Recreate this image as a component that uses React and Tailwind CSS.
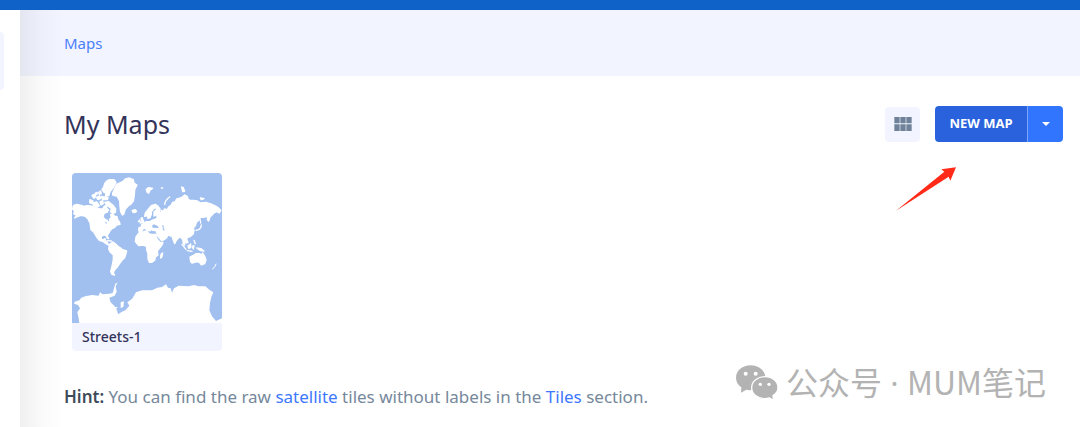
import { useState } from 'react';

const maps = [{ id: 'streets-1', name: 'Streets-1' }];

function WorldThumbnail() {
  return (
    <svg viewBox="0 0 450 450" className="block w-full bg-[#a1c0f0]" aria-hidden="true">
      <g fill="#fff" stroke="#fff" strokeWidth="4" strokeLinejoin="round" strokeLinecap="round">
        {/* North America */}
        <path d="M4 98 14 94 28 97 36 100 44 98 58 99 68 104 82 107 92 108 96 101 103 96 104 106 110 112 102 118 95 124 93 132 98 138 107 143 110 150 114 145 113 138 118 134 116 124 124 125 130 131 135 130 136 138 143 148 144 154 134 156 128 163 120 167 113 175 110 181 105 188 110 197 106 196 103 188 94 186 88 190 88 198 93 201 99 197 101 204 106 207 107 213 114 214 112 217 100 211 92 205 82 202 74 192 66 178 57 170 54 150 48 138 40 130 28 127 18 130 8 135 14 127 5 122 8 114 2 108Z" />
        <path d="M122 60 134 34 152 26 160 18 172 15 184 20 186 30 195 36 188 50 187 68 184 84 178 92 168 100 160 108 155 124 151 126 146 116 144 100 143 84 136 70 122 66Z" />
        <path d="M90 50 95 42 98 32 104 24 112 20 126 20 132 28 124 44 114 56 110 68 100 70 102 60 96 58Z" />
        <path d="M98 88 110 86 122 96 131 108 130 118 122 122 116 116 118 106 106 98Z" />
        <path d="M64 90 74 87 82 98 74 103 64 99ZM54 80 63 84 60 92 53 89ZM60 68 66 64 72 70 66 76ZM74 74 82 68 86 76 78 80ZM88 70 96 72 108 74 106 80 92 80ZM84 86 92 84 94 92 87 96ZM80 58 86 54 88 62 82 64ZM70 60 75 58 76 63 71 64ZM98 112 105 112 106 118 99 118Z" />
        <path d="M181 112 190 110 194 115 187 119 182 117ZM106 203 118 204M121 207 126 208" />
        {/* South America */}
        <path d="M112 216 118 210 130 212 138 220 146 225 152 230 164 234 162 242 158 254 150 262 144 270 136 282 128 290 124 300 128 306 120 304 116 296 120 280 124 260 124 246 114 236 110 228Z" />
        {/* Africa */}
        <path d="M202 178 212 177 222 174 228 177 230 182 238 184 250 184 256 188 262 200 266 208 273 208 270 216 262 226 256 234 258 246 250 252 248 262 240 268 232 268 228 258 228 242 224 230 224 220 212 216 200 218 190 206 192 192ZM267 244 272 240 270 251 266 255Z" />
      </g>
      <g
        transform="translate(180 66)"
        fill="#fff"
        stroke="#fff"
        strokeWidth="4"
        strokeLinejoin="round"
        strokeLinecap="round"
      >
        {/* Europe and Asia */}
        <path d="M20 106 21 98 30 96 28 90 36 84 44 80 54 80 62 74 70 70 66 62 66 50 74 44 72 32 78 34 84 42 82 52 88 54 88 46 94 50 97 42 106 44 110 36 118 30 122 22 130 20 134 12 148 8 158 0 166 4 168 12 174 16 184 16 196 18 206 24 222 22 240 28 256 36 266 46 262 54 254 50 246 54 240 60 234 66 230 78 226 74 228 64 218 66 204 68 200 76 194 80 190 92 184 98 186 106 184 116 176 124 166 128 164 134 168 142 162 144 156 134 158 150 154 146 152 134 146 126 140 128 132 138 128 146 124 136 120 124 108 120 98 115 96 117 106 123 104 128 96 134 88 138 82 130 74 114 72 107 62 106 56 102 54 108 50 102 46 98 44 98 50 106 46 108 40 100 34 100 30 108 22 110Z" />
        <path d="M38 64 40 54 48 44 58 32 70 28 78 34 72 38 64 42 58 50 58 58 54 68 48 70 46 62Z" />
        <path d="M25 84 30 79 27 70 31 68 33 76 36 81ZM19 80 23 75 24 80Z" />
        <path d="M98 28Q99 16 113 6" fill="none" />
        <path d="M43 -17 50 -22 62 -20 54 -14 50 -5 45 -9ZM88 -21 92 -21ZM149 -24 154 -22 158 -11 152 -10ZM205 9 216 11 208 14Z" />
        <path d="M192 106 200 104 206 98 208 90M204 72 206 84M186 136 190 146M150 148 162 163M166 167 180 169" fill="none" />
        <path d="M168 153 176 147 176 158 170 160ZM181 154 186 152 184 162ZM194 159 206 161 216 168 206 167Z" />
        {/* Australia and New Zealand */}
        <path d="M174 186 186 180 192 176 204 176 208 182 212 174 218 184 222 194 218 206 208 210 204 204 196 200 180 204 176 200Z" />
        <path d="M252 207 249 214 242 222" fill="none" strokeWidth="3" />
      </g>
      {/* Inland seas and lakes */}
      <g fill="#a1c0f0">
        <path d="M240 158 246 154 258 160 260 165 242 164ZM270 156 275 158 275 166 279 172 273 172 272 163ZM252 128 254 134 244 139 234 140 240 134ZM254 188 264 200 270 208 265 206 257 197Z" />
        <path d="M98 145 106 150 102 152Z" />
      </g>
      {/* Antarctica */}
      <path
        fill="#fff"
        d="M22 450 20 436 16 418 24 406 18 396 6 392 8 386 22 382 28 374 40 370 60 366 80 368 84 358 92 364 112 362 122 360 126 346 130 332 137 328 131 340 134 356 128 368 112 374 116 388 128 400 136 414 138 424 150 416 160 412 172 398 166 388 180 378 186 368 192 358 210 352 240 352 256 344 270 342 282 334 288 344 296 346 300 359 306 346 320 338 350 340 366 336 380 340 400 340 412 350 424 358 418 372 414 390 412 412 420 430 432 444 450 436 450 450ZM146 388 156 385 154 402 146 405ZM128 402 137 402 134 407Z"
      />
    </svg>
  );
}

function WechatLogo() {
  return (
    <svg viewBox="0 0 126 105" className="h-[35px] w-[42px]" aria-hidden="true">
      <path
        fill="#b3b3b3"
        d="M44 1C20 1 0 17 0 38c0 12 6 22 16 29l-1 16 16-9c5 1 9 2 16 1 8 0 41-17 41-37C88 17 68 1 44 1Z"
      />
      <path
        fill="#b3b3b3"
        stroke="#fff"
        strokeWidth="4"
        d="M87 35c-22 0-40 14-40 33s18 33 40 33c5 0 9-1 13-2l13 6-2-13c9-6 15-14 15-24 0-19-17-33-39-33Z"
      />
      <g fill="#fff">
        <circle cx="29" cy="26" r="6" />
        <circle cx="59" cy="26" r="6" />
        <circle cx="73" cy="58" r="5" />
        <circle cx="99" cy="58" r="5" />
      </g>
    </svg>
  );
}

function App() {
  const [view, setView] = useState('grid');

  return (
    <div className="relative flex min-h-screen flex-col overflow-hidden bg-white font-['Noto_Sans',sans-serif]">
      <div className="h-[10px] bg-[#0f62c8]"></div>

      <div className="flex flex-1">
        {/* Sidebar edge */}
        <aside className="w-5 shrink-0 pt-[22px]">
          <div className="h-[58px] w-1 rounded-r bg-[#f2f5ff]"></div>
        </aside>

        <main className="relative min-w-0 flex-1">
          <div className="pointer-events-none absolute inset-y-0 left-0 w-11 bg-linear-to-r from-black/6 via-black/2 to-transparent"></div>

          <nav className="flex h-[66px] items-center bg-[#f2f5ff] pl-11">
            <a href="#maps" className="text-[15px] text-[#4a80fa]">Maps</a>
          </nav>

          <div className="pl-11 pr-[17px] pt-7">
            {/* Title and actions */}
            <div className="flex items-center justify-between">
              <h1 className="text-[25px] leading-10 text-[#333359]">My Maps</h1>
              <div className="relative flex items-center gap-[15px]">
                <button
                  type="button"
                  aria-label="Grid view"
                  aria-pressed={view === 'grid'}
                  onClick={() => setView(view === 'grid' ? 'list' : 'grid')}
                  className="flex h-[35px] w-[35px] items-center justify-center rounded bg-[#f2f5ff]"
                >
                  <svg viewBox="0 0 52 42" className="h-[14px] w-[18px]" fill="#6f8299">
                    <path d="M0 0h16v19H0zM18 0h16v19H18zM36 0h16v19H36zM0 22h16v20H0zM18 22h16v20H18zM36 22h16v20H36z" />
                  </svg>
                </button>
                <div className="flex h-9 overflow-hidden rounded text-white">
                  <button type="button" className="w-[92px] bg-[#2962dc] font-['Open_Sans',sans-serif] text-[13px] font-bold">
                    NEW MAP
                  </button>
                  <button
                    type="button"
                    aria-label="More options"
                    className="flex w-9 items-center justify-center border-l border-[#7fa5fb] bg-[#3175ff]"
                  >
                    <svg viewBox="0 0 8 4" className="h-1 w-2" fill="currentColor">
                      <path d="M0 0h8L4 4z" />
                    </svg>
                  </button>
                </div>
                <svg viewBox="0 0 180 132" className="absolute left-[11px] top-[61px] h-11 w-[60px]" aria-hidden="true">
                  <path fill="#ff2a17" d="M0 131 145 14 136 7 180 1 163 41 158 29Z" />
                </svg>
              </div>
            </div>

            {/* Map list */}
            <div className="mt-[29px] flex gap-4 pl-2">
              {maps.map((map) => (
                <a key={map.id} href={`#${map.id}`} className="w-[150px] overflow-hidden rounded bg-[#f2f5ff]">
                  <WorldThumbnail />
                  <div className="px-[10px] text-sm leading-7 font-medium text-[#333359]">
                    {map.name}
                  </div>
                </a>
              ))}
            </div>

            <p className="mt-[34px] text-[17px] leading-6 text-[#76889b]">
              <strong className="font-semibold text-[#3f4a5a]">Hint:</strong> You can find the raw{' '}
              <a href="#satellite" className="text-[#3d78ff]">satellite</a> tiles without labels in the{' '}
              <a href="#tiles" className="text-[#3d78ff]">Tiles</a> section.
            </p>
          </div>
        </main>
      </div>

      {/* Watermark */}
      <div className="pointer-events-none absolute right-[34px] bottom-[21px] flex items-center gap-2 text-[32px] leading-[46px] text-[#b3b3b3]">
        <WechatLogo />
        <span className="font-['Open_Sans','Noto_Sans_CJK_SC',sans-serif]">
          公众号 · <span className="font-['Noto_Sans_CJK_SC',sans-serif]">MUM</span>笔记
        </span>
      </div>
    </div>
  );
}

export default App;
